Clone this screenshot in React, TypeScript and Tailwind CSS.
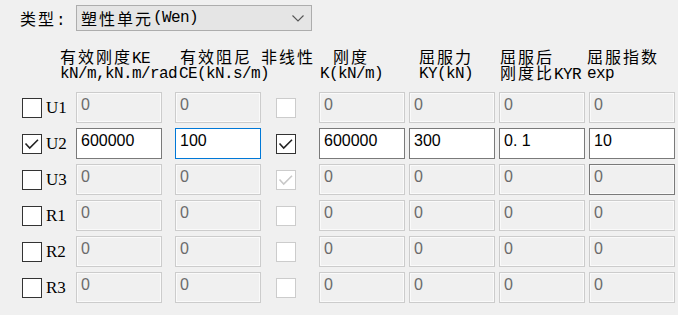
import React from "react";

const CJK = /[\u3000-\u9fff\uff00-\uffef]/;

function Mixed({ text, mono }: { text: string; mono?: boolean }) {
  const parts = text.match(/[\u3000-\u9fff\uff00-\uffef]+|[^\u3000-\u9fff\uff00-\uffef]+/g) || [];
  return (
    <>
      {parts.map((p, i) =>
        CJK.test(p) ? (
          <span key={i} className="font-['Noto_Sans_CJK_SC',sans-serif] text-[16px] tracking-[2px]">
            {p}
          </span>
        ) : mono ? (
          <span key={i} className="font-['Liberation_Mono',monospace] text-[16px] tracking-[-0.6px]">
            {p}
          </span>
        ) : (
          <span key={i} className="font-['Liberation_Serif',serif] text-[17px]">
            {p}
          </span>
        )
      )}
    </>
  );
}

function Check({ color }: { color: string }) {
  return (
    <svg width="20" height="20" viewBox="0 0 20 20" className="absolute -left-px -top-px">
      <path d="M3.5 9.5 L7.7 14 L16 5.8" fill="none" stroke={color} strokeWidth="1.6" />
    </svg>
  );
}

function Box({ checked, disabled }: { checked?: boolean; disabled?: boolean }) {
  return (
    <div
      className={
        "relative w-[20px] h-[20px] bg-white border " +
        (disabled ? "border-[#cccccc]" : "border-[#333333]")
      }
    >
      {checked && <Check color={disabled ? "#c8c8c8" : "#222222"} />}
    </div>
  );
}

type Cell = { v: string; state: "off" | "on" | "focus" | "hover" };

function Field({ c }: { c: Cell }) {
  const cls =
    c.state === "off"
      ? "bg-[#f0f0f0] border-[#cccccc] text-[#6b6b6b] shadow-[inset_0_0_0_1px_#fafafa]"
      : c.state === "hover"
      ? "bg-[#f0f0f0] border-[#7a7a7a] text-[#6b6b6b] shadow-[inset_0_0_0_1px_#fafafa]"
      : c.state === "focus"
      ? "bg-white border-[#0078d7] text-black"
      : "bg-white border-[#7a7a7a] text-black";
  return (
    <div
      className={
        "w-[86px] h-[31px] border pl-[4px] pt-[2px] leading-[20px] text-[16px] font-['Liberation_Sans',sans-serif] " +
        cls
      }
    >
      {c.v}
    </div>
  );
}

const off = (v = "0"): Cell => ({ v, state: "off" });

const rows: {
  name: string;
  checked: boolean;
  nl: { checked: boolean; disabled: boolean };
  cells: Cell[];
}[] = [
  { name: "U1", checked: false, nl: { checked: false, disabled: true }, cells: [off(), off(), off(), off(), off(), off()] },
  {
    name: "U2",
    checked: true,
    nl: { checked: true, disabled: false },
    cells: [
      { v: "600000", state: "on" },
      { v: "100", state: "focus" },
      { v: "600000", state: "on" },
      { v: "300", state: "on" },
      { v: "0. 1", state: "on" },
      { v: "10", state: "on" },
    ],
  },
  {
    name: "U3",
    checked: false,
    nl: { checked: true, disabled: true },
    cells: [off(), off(), off(), off(), off(), { v: "0", state: "hover" }],
  },
  { name: "R1", checked: false, nl: { checked: false, disabled: true }, cells: [off(), off(), off(), off(), off(), off()] },
  { name: "R2", checked: false, nl: { checked: false, disabled: true }, cells: [off(), off(), off(), off(), off(), off()] },
  { name: "R3", checked: false, nl: { checked: false, disabled: true }, cells: [off(), off(), off(), off(), off(), off()] },
];

const cols = "grid grid-cols-[76px_99px_86px_58px_90px_90px_90px_86px]";
const line = "h-[16px] leading-[16px]";

export default function App() {
  return (
    <div className="w-[678px] h-[315px] bg-[#f0f0f0] overflow-hidden text-black">
      {/* type selector */}
      <div className="flex items-center pt-[5px] pl-[20px] h-[31px]">
        <div className="w-[56px] h-[20px] leading-[20px] whitespace-nowrap">
          <Mixed text="类型:" mono />
        </div>
        <div className="relative w-[236px] h-[26px] bg-[#e5e5e5] border border-[#adadad] flex items-center pl-[4px] leading-[20px] whitespace-nowrap">
          <Mixed text="塑性单元(Wen)" mono />
          <svg width="12" height="7" viewBox="0 0 12 7" className="absolute right-[7px] top-[9px]">
            <path d="M0.5 0.5 L6 6 L11.5 0.5" fill="none" stroke="#555555" strokeWidth="1.1" />
          </svg>
        </div>
      </div>

      {/* headers */}
      <div className={cols + " mt-[17px] h-[32px] whitespace-nowrap"}>
        <div className="col-span-2 pl-[60px]">
          <div className={line}><Mixed text="有效刚度KE" mono /></div>
          <div className={line}><Mixed text="kN/m,kN.m/rad" mono /></div>
        </div>
        <div className="pl-[4px]">
          <div className={line + " pl-[1px]"}><Mixed text="有效阻尼" mono /></div>
          <div className={line}><Mixed text="CE(kN.s/m)" mono /></div>
        </div>
        <div>
          <div className={line}><Mixed text="非线性" mono /></div>
        </div>
        <div>
          <div className={line + " pl-[14px]"}><Mixed text="刚度" mono /></div>
          <div className={line + " pl-[1px]"}><Mixed text="K(kN/m)" mono /></div>
        </div>
        <div className="pl-[10px]">
          <div className={line}><Mixed text="屈服力" mono /></div>
          <div className={line}><Mixed text="KY(kN)" mono /></div>
        </div>
        <div className="pl-[1px]">
          <div className={line}><Mixed text="屈服后" mono /></div>
          <div className={line}><Mixed text="刚度比KYR" mono /></div>
        </div>
        <div className="-ml-[2px]">
          <div className={line}><Mixed text="屈服指数" mono /></div>
          <div className={line}><Mixed text="exp" mono /></div>
        </div>
      </div>

      {/* rows */}
      <div className={cols + " mt-[12px] gap-y-[5px]"}>
        {rows.map((r) => (
          <React.Fragment key={r.name}>
            <div className="flex items-center pl-[22px] gap-[4px] h-[31px]">
              <Box checked={r.checked} />
              <span className="leading-[20px]">
                <Mixed text={r.name} />
              </span>
            </div>
            <div><Field c={r.cells[0]} /></div>
            <div><Field c={r.cells[1]} /></div>
            <div className="flex items-center pl-[15px]">
              <Box checked={r.nl.checked} disabled={r.nl.disabled} />
            </div>
            <div><Field c={r.cells[2]} /></div>
            <div><Field c={r.cells[3]} /></div>
            <div><Field c={r.cells[4]} /></div>
            <div><Field c={r.cells[5]} /></div>
          </React.Fragment>
        ))}
      </div>
    </div>
  );
}
